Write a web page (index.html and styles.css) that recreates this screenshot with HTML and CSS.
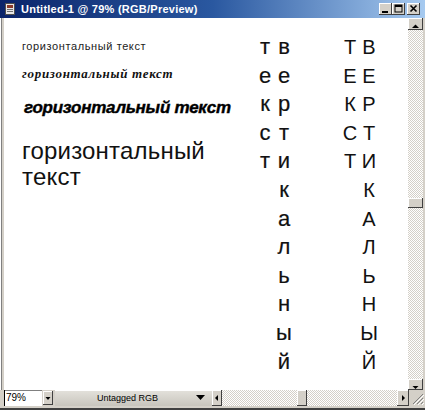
FILE: index.html
```html
<!DOCTYPE html>
<html lang="ru">
<head>
<meta charset="utf-8">
<title>Untitled-1 @ 79% (RGB/Preview)</title>
<link rel="stylesheet" href="styles.css">
</head>
<body>
<div class="window">
  <div class="titlebar">
    <svg class="app-icon" viewBox="0 0 12 12" width="12" height="12">
      <rect x="1.5" y="0.5" width="9" height="11" fill="#e8e8e8" stroke="#505050"/>
      <rect x="3" y="2" width="6" height="3" fill="#8a3a2a"/>
      <rect x="3" y="6" width="6" height="1" fill="#707070"/>
      <rect x="3" y="8" width="6" height="1" fill="#707070"/>
    </svg>
    <span class="title">Untitled-1 @ 79% (RGB/Preview)</span>
    <div class="win-btns">
      <div class="wbtn"><svg viewBox="0 0 13 12" width="13" height="12"><rect x="3" y="8" width="6" height="2" fill="#000"/></svg></div>
      <div class="wbtn"><svg viewBox="0 0 13 12" width="13" height="12"><rect x="3" y="2" width="7" height="7" fill="none" stroke="#000"/><rect x="3" y="2" width="7" height="2" fill="#000"/></svg></div>
      <div class="wbtn close"><svg viewBox="0 0 13 12" width="13" height="12"><path d="M3.5 2.5 L9.5 8.5 M9.5 2.5 L3.5 8.5" stroke="#000" stroke-width="1.6"/></svg></div>
    </div>
  </div>

  <div class="main">
    <div class="canvas">
      <div class="htext">
        <div class="h1">горизонтальный текст</div>
        <div class="h2">горизонтальный текст</div>
        <div class="h3">горизонтальный текст</div>
        <div class="h4">горизонтальный<br>текст</div>
      </div>
      <div class="vcols">
        <div class="vgroup lower">
          <div class="vcol"><span>т</span><span>е</span><span>к</span><span>с</span><span>т</span></div>
          <div class="vcol"><span>в</span><span>е</span><span>р</span><span>т</span><span>и</span><span>к</span><span>а</span><span>л</span><span>ь</span><span>н</span><span>ы</span><span>й</span></div>
        </div>
        <div class="vgroup upper">
          <div class="vcol"><span>Т</span><span>Е</span><span>К</span><span>С</span><span>Т</span></div>
          <div class="vcol"><span>В</span><span>Е</span><span>Р</span><span>Т</span><span>И</span><span>К</span><span>А</span><span>Л</span><span>Ь</span><span>Н</span><span>Ы</span><span>Й</span></div>
        </div>
      </div>
    </div>
    <div class="vscroll">
      <div class="sbtn up"><svg viewBox="0 0 15 12" width="15" height="12"><path d="M4 8 L11 8 L7.5 4.5 Z" fill="#000"/></svg></div>
      <div class="vtrack"><div class="vthumb"></div></div>
      <div class="sbtn down"><svg viewBox="0 0 15 11" width="15" height="11"><path d="M4.5 4 L10.5 4 L7.5 7 Z" fill="#000"/></svg></div>
    </div>
  </div>

  <div class="status">
    <div class="zoomfield">79%</div>
    <div class="zoombtn"><svg viewBox="0 0 10 14" width="10" height="14"><path d="M2.5 6 L7.5 6 L5 9 Z" fill="#000"/></svg></div>
    <div class="profile">
      <span class="profile-text">Untagged RGB</span>
      <svg class="profile-arrow" viewBox="0 0 9 6" width="9" height="6"><path d="M0 0 L9 0 L4.5 5 Z" fill="#000"/></svg>
    </div>
    <div class="hscroll">
      <div class="hbtn left"><svg viewBox="0 0 10 16" width="10" height="16"><path d="M6 5 L6 11 L3 8 Z" fill="#000"/></svg></div>
      <div class="htrack"><div class="hthumb"></div></div>
      <div class="hbtn right"><svg viewBox="0 0 12 16" width="12" height="16"><path d="M5 5 L5 11 L8 8 Z" fill="#000"/></svg></div>
    </div>
    <div class="grip"><svg viewBox="0 0 16 16" width="16" height="16"><path d="M14 4 L4 14 M14 8 L8 14 M14 12 L12 14" stroke="#808080" stroke-width="1"/><path d="M15 5 L5 15 M15 9 L9 15 M15 13 L13 15" stroke="#fff" stroke-width="1"/></svg></div>
  </div>
</div>
</body>
</html>
```

FILE: styles.css
```css
html, body {
  margin: 0;
  padding: 0;
}

body {
  width: 425px;
  height: 410px;
  overflow: hidden;
  background: #d4d0c8;
  font-family: "Liberation Sans", Arial, sans-serif;
}

.window {
  width: 425px;
  height: 410px;
  display: flex;
  flex-direction: column;
  box-sizing: border-box;
  border-bottom: 2px solid #404040;
  background: #d4d0c8;
}

/* title bar */
.titlebar {
  flex: none;
  height: 18px;
  display: flex;
  align-items: center;
  padding: 0 5px 0 4px;
  background: linear-gradient(to right, #0a246a 0%, #2a58a0 50%, #a6caf0 100%);
}

.app-icon {
  flex: none;
  margin-right: 5px;
}

.title {
  flex: 1;
  color: #fff;
  font-weight: bold;
  font-size: 11px;
  letter-spacing: 0.25px;
  white-space: nowrap;
}

.win-btns {
  display: flex;
}

.wbtn {
  width: 13px;
  height: 12px;
  background: #d4d0c8;
  box-shadow: inset -1px -1px #404040, inset 1px 1px #ffffff;
  display: flex;
}

.wbtn.close {
  margin-left: 2px;
}

/* main area */
.main {
  flex: none;
  height: 372px;
  display: flex;
  padding-left: 4px;
  padding-right: 2px;
  box-shadow: inset 1px 0 #ffffff, inset 2px 0 #808080;
}

.canvas {
  flex: 1;
  min-width: 0;
  background: #ffffff;
  display: flex;
  padding: 15px 0 0 18px;
  color: #111;
}

.htext {
  flex: none;
  width: 234px;
  white-space: nowrap;
}

.h1 {
  margin-top: 7px;
  font-size: 11px;
  line-height: 13px;
  letter-spacing: 0.6px;
  color: #222;
}

.h2 {
  margin-top: 13px;
  font-family: "Liberation Serif", "Times New Roman", serif;
  font-weight: bold;
  font-style: italic;
  font-size: 13px;
  line-height: 16px;
  letter-spacing: 0.7px;
}

.h3 {
  margin-top: 16px;
  margin-left: 2px;
  font-weight: bold;
  font-style: italic;
  font-size: 17px;
  line-height: 20px;
  letter-spacing: -0.25px;
  color: #000;
  -webkit-text-stroke: 0.4px #000;
}

.h4 {
  margin-top: 20px;
  font-size: 24px;
  line-height: 26px;
  letter-spacing: 0.2px;
}

.vcols {
  flex: none;
  display: flex;
  gap: 48px;
}

.vgroup {
  display: flex;
  gap: 1px;
}

.vcol {
  width: 18px;
  display: flex;
  flex-direction: column;
  align-items: center;
  line-height: 28.6px;
}

.lower .vcol {
  font-size: 22px;
  -webkit-text-stroke: 0.2px #111;
}

.upper .vcol {
  font-size: 20px;
}

/* vertical scrollbar */
.vscroll {
  flex: none;
  width: 15px;
  display: flex;
  flex-direction: column;
  background: repeating-conic-gradient(#ffffff 0 25%, #d4d0c8 0 50%) 0 0 / 2px 2px;
}

.sbtn {
  flex: none;
  background: #d4d0c8;
  box-shadow: inset -1px -1px #404040, inset 1px 1px #ffffff;
}

.sbtn.up { height: 12px; }
.sbtn.down { height: 11px; }

.vtrack {
  flex: 1;
}

.vthumb {
  margin-top: 168px;
  height: 10px;
  background: #d4d0c8;
  box-shadow: inset -1px -1px #404040, inset 1px 1px #ffffff;
}

/* status row */
.status {
  flex: none;
  height: 16px;
  display: flex;
  padding-left: 4px;
  box-sizing: border-box;
}

.zoomfield {
  width: 38px;
  background: #ffffff;
  box-shadow: inset 1px 0 #000, inset 0 1px #808080;
  font-size: 10px;
  line-height: 16px;
  padding-left: 2px;
  box-sizing: border-box;
  color: #000;
}

.zoombtn {
  width: 10px;
  margin-left: 1px;
  margin-top: 1px;
  height: 14px;
  background: #d4d0c8;
  box-shadow: inset -1px -1px #404040, inset 1px 1px #ffffff;
}

.profile {
  width: 157px;
  margin-left: 2px;
  display: flex;
  align-items: center;
  background: linear-gradient(#e4e2dc, #c8c5bd);
  box-shadow: inset 0 1px #ffffff;
  padding-left: 42px;
  padding-right: 7px;
  box-sizing: border-box;
}

.profile-text {
  flex: 1;
  font-size: 9px;
  color: #000;
}

.hscroll {
  flex: 1;
  display: flex;
  background: repeating-conic-gradient(#ffffff 0 25%, #d4d0c8 0 50%) 0 0 / 2px 2px;
}

.hbtn {
  flex: none;
  background: #d4d0c8;
  box-shadow: inset -1px -1px #404040, inset 1px 1px #ffffff;
}

.hbtn.left { width: 10px; }
.hbtn.right { width: 12px; }

.htrack {
  flex: 1;
}

.hthumb {
  margin-left: 75px;
  width: 10px;
  height: 16px;
  background: #d4d0c8;
  box-shadow: inset -1px -1px #404040, inset 1px 1px #ffffff;
}

.grip {
  flex: none;
  width: 16px;
  height: 16px;
  background: #d4d0c8;
}
```
